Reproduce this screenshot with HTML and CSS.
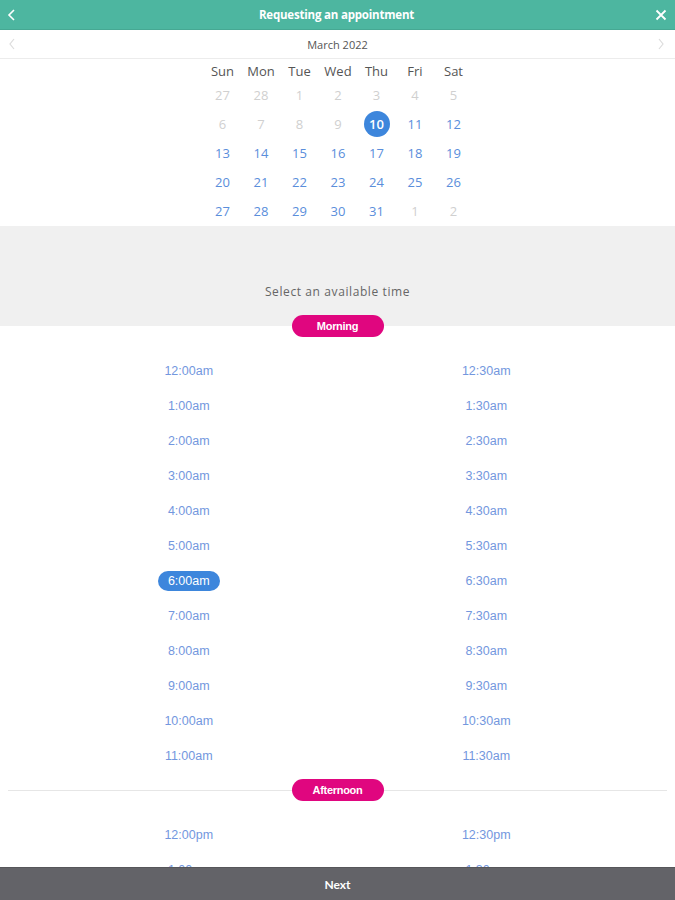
FILE: index.html
```html
<!DOCTYPE html>
<html>
<head>
<meta charset="utf-8">
<link rel="stylesheet" href="styles.css">
</head>
<body>
<header class="topbar">
  <button class="icon-btn back" aria-label="Back">
    <svg width="10" height="12" viewBox="0 0 10 12"><path d="M7 1 L2 6 L7 11" fill="none" stroke="#fff" stroke-width="1.6"/></svg>
  </button>
  <h1 class="title">Requesting an appointment</h1>
  <button class="icon-btn close" aria-label="Close">
    <svg width="12" height="12" viewBox="0 0 12 12"><path d="M1.5 1.5 L10.5 10.5 M10.5 1.5 L1.5 10.5" fill="none" stroke="#fff" stroke-width="1.8"/></svg>
  </button>
</header>

<div class="month-nav">
  <span class="nav-arrow">
    <svg width="8" height="12" viewBox="0 0 8 12"><path d="M6 1 L2 6 L6 11" fill="none" stroke="#dcdcdc" stroke-width="1.2"/></svg>
  </span>
  <span class="month">March 2022</span>
  <span class="nav-arrow">
    <svg width="8" height="12" viewBox="0 0 8 12"><path d="M2 1 L6 6 L2 11" fill="none" stroke="#dcdcdc" stroke-width="1.2"/></svg>
  </span>
</div>

<div class="calendar">
  <div class="wd">Sun</div><div class="wd">Mon</div><div class="wd">Tue</div><div class="wd">Wed</div><div class="wd">Thu</div><div class="wd">Fri</div><div class="wd">Sat</div>
  <div class="day muted">27</div><div class="day muted">28</div><div class="day muted">1</div><div class="day muted">2</div><div class="day muted">3</div><div class="day muted">4</div><div class="day muted">5</div>
  <div class="day muted">6</div><div class="day muted">7</div><div class="day muted">8</div><div class="day muted">9</div><div class="day"><span class="sel">10</span></div><div class="day">11</div><div class="day">12</div>
  <div class="day">13</div><div class="day">14</div><div class="day">15</div><div class="day">16</div><div class="day">17</div><div class="day">18</div><div class="day">19</div>
  <div class="day">20</div><div class="day">21</div><div class="day">22</div><div class="day">23</div><div class="day">24</div><div class="day">25</div><div class="day">26</div>
  <div class="day">27</div><div class="day">28</div><div class="day">29</div><div class="day">30</div><div class="day">31</div><div class="day muted">1</div><div class="day muted">2</div>
</div>

<div class="band">
  <p class="band-text">Select an available time</p>
</div>

<div class="divider first">
  <span class="pill">Morning</span>
</div>

<div class="slots">
  <div class="slot">12:00am</div><div class="slot">12:30am</div>
  <div class="slot">1:00am</div><div class="slot">1:30am</div>
  <div class="slot">2:00am</div><div class="slot">2:30am</div>
  <div class="slot">3:00am</div><div class="slot">3:30am</div>
  <div class="slot">4:00am</div><div class="slot">4:30am</div>
  <div class="slot">5:00am</div><div class="slot">5:30am</div>
  <div class="slot"><span class="slot-sel">6:00am</span></div><div class="slot">6:30am</div>
  <div class="slot">7:00am</div><div class="slot">7:30am</div>
  <div class="slot">8:00am</div><div class="slot">8:30am</div>
  <div class="slot">9:00am</div><div class="slot">9:30am</div>
  <div class="slot">10:00am</div><div class="slot">10:30am</div>
  <div class="slot">11:00am</div><div class="slot">11:30am</div>
</div>

<div class="divider line">
  <span class="rule"></span>
  <span class="pill">Afternoon</span>
  <span class="rule"></span>
</div>

<div class="slots">
  <div class="slot">12:00pm</div><div class="slot">12:30pm</div>
  <div class="slot">1:00pm</div><div class="slot">1:30pm</div>
</div>

<footer class="next-bar">Next</footer>
</body>
</html>
```

FILE: styles.css
```css
* { box-sizing: border-box; }
html, body { margin: 0; padding: 0; }
body {
  background: #fff;
  font-family: "Open Sans", "Noto Sans", sans-serif;
  width: 675px;
}
.topbar {
  height: 30px;
  background: #4db6a0;
  display: flex;
  align-items: center;
  justify-content: space-between;
  padding: 0 6px 0 4px;
  border-bottom: 1px solid #46a893;
}
.icon-btn {
  background: none;
  border: 0;
  padding: 0;
  width: 16px;
  height: 16px;
  display: flex;
  align-items: center;
  justify-content: center;
}
.title {
  margin: 0;
  color: #fff;
  font-size: 11.5px;
  font-weight: 700;
  letter-spacing: -0.2px;
}
.month-nav {
  height: 29px;
  display: flex;
  align-items: center;
  justify-content: space-between;
  padding: 0 8px;
  border-bottom: 1px solid #ececec;
}
.nav-arrow { display: flex; width: 10px; }
.month {
  font-size: 11px;
  color: #555;
}
.calendar {
  display: grid;
  grid-template-columns: repeat(7, 38.5px);
  grid-template-rows: 21px repeat(5, 29px);
  justify-content: center;
  padding-left: 1px;
  padding-bottom: 1px;
}
.wd {
  display: flex;
  align-items: center;
  justify-content: center;
  font-size: 13px;
  color: #555;
  padding-top: 2px;
}
.day {
  display: flex;
  align-items: center;
  justify-content: center;
  font-size: 13px;
  color: #5a8edb;
}
.day.muted { color: #d0d0d0; }
.sel {
  width: 26px;
  height: 26px;
  border-radius: 50%;
  background: #3d86dc;
  color: #fff;
  font-weight: 600;
  display: flex;
  align-items: center;
  justify-content: center;
}
.band {
  height: 89px;
  background: #f0f0f0;
  display: flex;
  align-items: flex-end;
  justify-content: center;
  padding-bottom: 15px;
}
.band-text {
  margin: 0;
  font-size: 12px;
  color: #666;
  letter-spacing: 0.6px;
}
.divider {
  height: 22px;
  display: flex;
  align-items: center;
  justify-content: center;
}
.divider.first {
  background: linear-gradient(to bottom, #f0f0f0 0, #f0f0f0 11px, #fff 11px);
}
.divider.line {
  padding: 0 8px;
  margin-top: 6px;
}
.rule {
  flex: 1;
  height: 1px;
  background: #e6e6e6;
}
.pill {
  width: 92px;
  height: 22px;
  border-radius: 11px;
  background: #e0067f;
  color: #fff;
  font-family: "Liberation Sans", Arial, sans-serif;
  font-size: 11px;
  font-weight: 700;
  letter-spacing: -0.3px;
  display: flex;
  align-items: center;
  justify-content: center;
}
.slots {
  display: grid;
  grid-template-columns: 1fr 1fr;
  grid-auto-rows: 35px;
  margin: 0 40px;
  padding-top: 16px;
}
.slot {
  display: flex;
  align-items: center;
  justify-content: center;
  font-family: "Liberation Sans", Arial, sans-serif;
  font-size: 12.5px;
  color: #7397de;
}
.slot-sel {
  background: #3d86dc;
  color: #fff;
  border-radius: 10px;
  width: 62px;
  height: 20px;
  display: flex;
  align-items: center;
  justify-content: center;
}
.next-bar {
  position: fixed;
  left: 0;
  right: 0;
  bottom: 0;
  height: 33px;
  background: #636368;
  border-top: 1px solid #56565a;
  color: #fff;
  font-family: "Lato", sans-serif;
  font-weight: 700;
  font-size: 12px;
  display: flex;
  align-items: center;
  justify-content: center;
}
```
